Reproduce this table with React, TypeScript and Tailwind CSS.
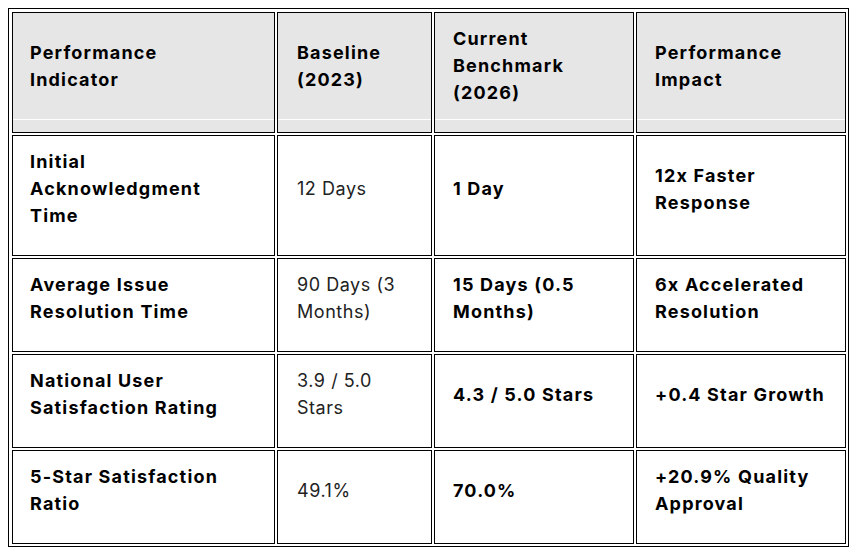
import React from "react";

const header = [
  ["Performance", "Indicator"],
  ["Baseline", "(2023)"],
  ["Current", "Benchmark", "(2026)"],
  ["Performance", "Impact"],
];

const rows: string[][][] = [
  [["Initial", "Acknowledgment", "Time"], ["12 Days"], ["1 Day"], ["12x Faster", "Response"]],
  [["Average Issue", "Resolution Time"], ["90 Days (3", "Months)"], ["15 Days (0.5", "Months)"], ["6x Accelerated", "Resolution"]],
  [["National User", "Satisfaction Rating"], ["3.9 / 5.0", "Stars"], ["4.3 / 5.0 Stars"], ["+0.4 Star Growth"]],
  [["5-Star Satisfaction", "Ratio"], ["49.1%"], ["70.0%"], ["+20.9% Quality", "Approval"]],
];

const widths = ["w-[263px]", "w-[155px]", "w-[200px]", "w-[210px]"];
const pads = ["pl-[17px]", "pl-[19px]", "pl-[18px]", "pl-[18px]"];

function Lines({ lines }: { lines: string[] }) {
  return (
    <>
      {lines.map((l, i) => (
        <React.Fragment key={i}>
          {i > 0 && <br />}
          {l}
        </React.Fragment>
      ))}
    </>
  );
}

export default function App() {
  return (
    <div className="bg-white w-[857px] h-[559px] pt-[8px] pl-[8px] font-['Inter','Liberation_Sans',sans-serif] text-[18px] leading-[27px]">
      <table className="border-separate border-spacing-[2px] border border-black pt-px pl-px table-fixed">
        <thead>
          <tr>
            {header.map((h, i) => (
              <th
                key={i}
                className={`${widths[i]} ${pads[i]} border border-black bg-[linear-gradient(to_top,#e7e6e6_12px,#ffffff_12px,#ffffff_13px,#e7e6e6_13px)] pt-[12px] pb-[26px] pr-[6px] text-left align-middle font-bold text-black tracking-[0.065em]`}
              >
                <Lines lines={h} />
              </th>
            ))}
          </tr>
        </thead>
        <tbody>
          {rows.map((r, ri) => (
            <tr key={ri}>
              {r.map((c, ci) => (
                <td
                  key={ci}
                  className={`${widths[ci]} ${pads[ci]} border border-black pt-[12px] pb-[26px] pr-[6px] text-left align-middle ${
                    ci === 1 ? "font-normal text-[#222222] tracking-[0.03em]" : "font-bold text-black tracking-[0.065em]"
                  }`}
                >
                  <Lines lines={c} />
                </td>
              ))}
            </tr>
          ))}
        </tbody>
      </table>
    </div>
  );
}
